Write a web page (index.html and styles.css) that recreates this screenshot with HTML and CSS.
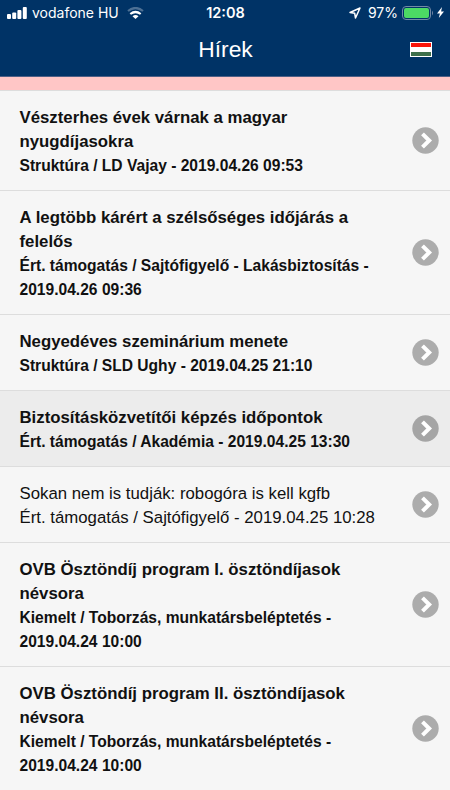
FILE: index.html
```html
<!DOCTYPE html>
<html lang="hu">
<head>
    <meta charset="UTF-8">
    <meta name="viewport" content="width=device-width, initial-scale=1.0">
    <title>Hírek</title>
    <link rel="stylesheet" href="styles.css">
</head>
<body>

    <div class="status-bar">
        <div class="carrier">
            <svg class="signal" viewBox="0 0 20 12"><g fill="#fff"><rect x="0" y="7" width="4" height="5" rx="1"/><rect x="5.2" y="5.5" width="4" height="6.5" rx="1"/><rect x="10.4" y="3" width="4" height="9" rx="1"/><rect x="15.8" y="0" width="4" height="12" rx="1"/></g></svg>
            <span class="carrier-name">vodafone HU</span>
            <svg class="wifi" viewBox="0 0 17 12"><g fill="none" stroke="#fff" stroke-width="2.2"><path stroke="#4d7094" d="M1 4Q8.5-2 16 4"/><path d="M3.3 7Q8.5 3 13.7 7"/></g><path fill="#fff" d="M5.5 9.2Q8.5 6.9 11.500 9.2L8.5 12z"/></svg>
        </div>
        <span class="time">12:08</span>
        <div class="power">
            <svg class="location" viewBox="0 0 12 12"><path fill="none" stroke="#fff" stroke-width="1.5" stroke-linejoin="round" d="M1 5.5L11 1 6.5 11 5.700 6.300z"/></svg>
            <span class="percent">97%</span>
            <svg class="battery" viewBox="0 0 32 14"><rect x=".5" y=".5" width="28" height="13" rx="3.5" fill="none" stroke="#7288a5"/><rect x="2" y="2" width="25" height="10" rx="2" fill="#4cd964"/><path fill="#7288a5" d="M30 4.5q2 2.500 0 5z"/></svg>
            <svg class="bolt" viewBox="0 0 7 11"><path fill="#fff" d="M5 0L0 6.400h2.900L1.800 11 7 4.500H4.100z"/></svg>
        </div>
    </div>

    <div class="header">
        <h1>Hírek</h1>
        <div class="flag"><i class="red"></i><i class="white"></i><i class="green"></i></div>
    </div>

    <ul class="news" id="news"></ul>

    <script>
        const news = [
            { title: 'Vészterhes évek várnak a magyar<br>nyugdíjasokra', info: 'Struktúra / LD Vajay - 2019.04.26 09:53' },
            { title: 'A legtöbb kárért a szélsőséges időjárás a<br>felelős', info: 'Ért. támogatás / Sajtófigyelő - Lakásbiztosítás -<br>2019.04.26 09:36' },
            { title: 'Negyedéves szeminárium menete', info: 'Struktúra / SLD Ughy - 2019.04.25 21:10' },
            { title: 'Biztosításközvetítői képzés időpontok', info: 'Ért. támogatás / Akadémia - 2019.04.25 13:30', state: 'active' },
            { title: 'Sokan nem is tudják: robogóra is kell kgfb', info: 'Ért. támogatás / Sajtófigyelő - 2019.04.25 10:28', state: 'read' },
            { title: 'OVB Ösztöndíj program I. ösztöndíjasok<br>névsora', info: 'Kiemelt / Toborzás, munkatársbeléptetés -<br>2019.04.24 10:00' },
            { title: 'OVB Ösztöndíj program II. ösztöndíjasok<br>névsora', info: 'Kiemelt / Toborzás, munkatársbeléptetés -<br>2019.04.24 10:00' }
        ];

        document.getElementById('news').innerHTML = news.map(item => `
            <li class="news-item ${item.state || ''}">
                <div class="news-text">
                    <div class="title">${item.title}</div>
                    <div class="info">${item.info}</div>
                </div>
                <svg class="arrow" viewBox="0 0 27 27"><circle class="disc" cx="13.5" cy="13.5" r="13.2"/><path fill="none" stroke="#fff" stroke-width="4" d="M10.5 6.8L17.2 13.5l-6.7 6.7"/></svg>
            </li>`).join('');
    </script>

</body>
</html>
```

FILE: styles.css
```css
* {
    box-sizing: border-box;
}

body {
    margin: 0;
    height: 800px;
    overflow: hidden;
    background-color: #ffc6c6;
    font-family: "Liberation Sans", Arial, sans-serif;
    color: #111;
}

.status-bar {
    display: grid;
    grid-template-columns: 1fr auto 1fr;
    align-items: center;
    height: 25px;
    padding: 0 6px 0 7px;
    background-color: #003366;
    color: #fff;
    font-family: Inter, sans-serif;
    font-size: 14px;
}

.carrier, .power {
    display: flex;
    align-items: center;
}

.power {
    justify-content: flex-end;
}

.signal {
    width: 20px;
    height: 12px;
    margin-right: 5px;
}

.wifi {
    width: 17px;
    height: 12px;
    margin-left: 8px;
}

.time {
    font-weight: 600;
    font-size: 14.5px;
}

.location {
    width: 12px;
    height: 12px;
    margin-right: 7px;
}

.battery {
    width: 32px;
    height: 14px;
    margin: 0 3px 0 4px;
}

.bolt {
    width: 7px;
    height: 11px;
}

.header {
    display: grid;
    grid-template-columns: 1fr auto 1fr;
    align-items: center;
    height: 52px;
    padding: 0 18px 3px 19px;
    border-bottom: 1px solid #4d5f86;
    background-color: #003366;
    color: #fff;
}

.header h1 {
    grid-column: 2;
    margin: 0;
    font-size: 22.8px;
    font-weight: normal;
}

.flag {
    display: flex;
    flex-direction: column;
    justify-self: end;
    width: 22px;
    height: 15px;
    margin-top: 1px;
    border: 1px solid #fff;
}

.flag i {
    flex: 1;
}

.red {
    background-color: #fa1409;
}

.white {
    background-color: #fff;
}

.green {
    background-color: #3d6f4b;
}

.news {
    list-style: none;
    margin: 13px 0 0;
    padding: 0;
}

.news-item {
    display: flex;
    align-items: center;
    justify-content: space-between;
    padding: 15px 11px 12px 19.5px;
    border-top: 1px solid #ddd;
    background-color: #f6f6f6;
    font-weight: bold;
    line-height: 24px;
    white-space: nowrap;
}

.news-item.active {
    background-color: #ececec;
}

.news-item.read {
    font-weight: normal;
}

.title {
    font-size: 16.8px;
}

.info {
    font-size: 15.6px;
}

.read .info {
    font-size: 16.8px;
}

.arrow {
    width: 27px;
    height: 27px;
    margin-bottom: 4px;
}

.disc {
    fill: #acacac;
}

.active .disc {
    fill: #a5a5a5;
}
```
